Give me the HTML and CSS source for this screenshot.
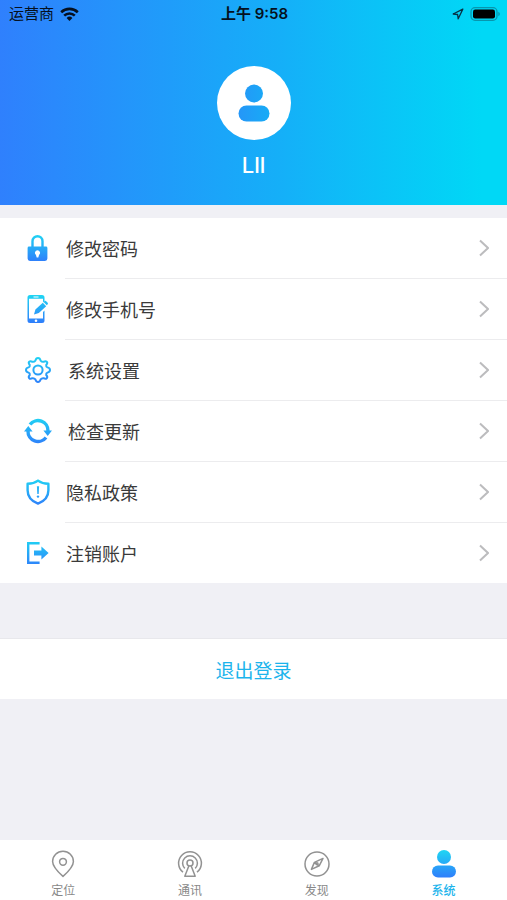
FILE: index.html
```html
<!DOCTYPE html>
<html lang="zh-CN">
<head>
    <meta charset="UTF-8">
    <meta name="viewport" content="width=device-width, initial-scale=1.0">
    <title>系统</title>
    <link rel="stylesheet" href="styles.css">
</head>
<body>
    <svg class="defs" width="0" height="0" aria-hidden="true">
        <defs>
            <linearGradient id="blue" gradientUnits="userSpaceOnUse" x1="0" y1="0" x2="0" y2="28">
                <stop offset="0" stop-color="#1fd6f3"/>
                <stop offset="1" stop-color="#2f7dfb"/>
            </linearGradient>
            <linearGradient id="blue-side" gradientUnits="userSpaceOnUse" x1="0" y1="0" x2="32" y2="0">
                <stop offset="0" stop-color="#2596f8"/>
                <stop offset="1" stop-color="#17acf6"/>
            </linearGradient>
        </defs>
    </svg>

    <header class="profile">
        <div class="status">
            <div class="status-left">
                <span>运营商</span>
                <svg width="19" height="14" viewBox="0 0 19 14">
                    <g fill="none" stroke="#051020" stroke-width="2.6">
                        <path d="M1.2 5.2a12 12 0 0 1 16.6 0"/>
                        <path d="M4.2 8.6a7.6 7.6 0 0 1 10.6 0"/>
                    </g>
                    <path fill="#051020" d="M6.6 11a4.2 4.2 0 0 1 5.8 0L9.5 14z"/>
                </svg>
            </div>
            <div class="status-time">上午 9:58</div>
            <div class="status-right">
                <svg width="12" height="12" viewBox="0 0 12 12">
                    <path d="M10.8 1.2 1.2 6l4.4.5.6 4.3z" fill="none" stroke="#083044" stroke-width="1.3" stroke-linejoin="round"/>
                </svg>
                <svg width="30" height="14" viewBox="0 0 30 14">
                    <rect x="1" y=".7" width="26" height="12.6" rx="4" fill="none" stroke="#0796ae" stroke-width="1.3"/>
                    <rect x="3" y="2.6" width="22" height="8.8" rx="2.2" fill="#000"/>
                    <path d="M28.3 4.8q1.6.7 1.6 2.2t-1.6 2.2z" fill="#0796ae"/>
                </svg>
            </div>
        </div>
        <div class="avatar">
            <svg width="32" height="38" viewBox="0 0 32 38" fill="url(#blue-side)">
                <circle cx="16" cy="9.5" r="9"/>
                <rect x=".5" y="21.5" width="31" height="16" rx="8"/>
            </svg>
        </div>
        <h1 class="name">Lll</h1>
    </header>

    <main>
        <ul class="menu">
            <li>
                <a class="menu-row" href="#password">
                    <svg class="menu-icon" viewBox="0 0 26 28">
                        <path d="M8.5 13V7.2a5 5 0 0 1 10 0V13" fill="none" stroke="url(#blue)" stroke-width="2.4"/>
                        <path fill="url(#blue)" fill-rule="evenodd" d="M5 12.600h17a1.400 1.400 0 0 1 1.400 1.400v10.600a2.400 2.400 0 0 1-2.400 2.400H6a2.400 2.400 0 0 1-2.400-2.400V14A1.400 1.400 0 0 1 5 12.600zm8.500 3.600a2.600 2.600 0 0 0-1.600 4.600l.8 2.600h1.600l.8-2.600a2.600 2.600 0 0 0-1.600-4.600z"/>
                    </svg>
                    <span>修改密码</span>
                    <svg class="chevron" viewBox="0 0 10 18"><path d="m1 1.5 8 7.5-8 7.5"/></svg>
                </a>
            </li>
            <li>
                <a class="menu-row" href="#phone">
                    <svg class="menu-icon" viewBox="0 0 26 28">
                        <path fill="url(#blue)" fill-rule="evenodd" d="M6 0h12a2.5 2.5 0 0 1 2.5 2.5V6L19 7.5V3.8H5v19.8h14V17l1.500-1.500v10A2.500 2.500 0 0 1 18 28H6a2.500 2.500 0 0 1-2.500-2.500v-23A2.500 2.500 0 0 1 6 0zm3.500 1.400v1.100h5V1.400zM12 24.400a1.300 1.300 0 1 0 0 2.600 1.300 1.300 0 0 0 0-2.600z"/>
                        <path fill="url(#blue)" d="m10 19.600 1.400-5 7.400-6.800 3.400 3.400-7.400 6.800zM19.600 7l1-.9q.8-.6 1.600.1l1.500 1.500q.6.800 0 1.500l-.9 1z"/>
                    </svg>
                    <span>修改手机号</span>
                    <svg class="chevron" viewBox="0 0 10 18"><path d="m1 1.5 8 7.5-8 7.5"/></svg>
                </a>
            </li>
            <li>
                <a class="menu-row" href="#settings">
                    <svg class="menu-icon menu-icon--wide" viewBox="0 0 28 28">
                        <g fill="none" stroke="url(#blue)" stroke-width="2" stroke-linejoin="round">
                            <path d="M11.4 4.600 Q12 2 14 2t2.600 2.600q1.200 1.500 3 1.200 2-1.200 3.200 0t-.6 3.200q-.3 1.800 1.200 2.400Q26 12 26 14t-2.600 2.600q-1.500.6-1.200 2.400 1.800 2 .6 3.200t-3.200 0q-1.800-.3-3 1.200Q16 26 14 26t-2.600-2.600q-1.200-1.500-3-1.200-2 1.200-3.200 0t.6-3.200q.3-1.800-1.200-2.400Q2 16 2 14t2.600-2.600q1.500-.6 1.200-2.400-1.800-2-.6-3.200t3.200 0q1.800.3 3-1.200z"/>
                            <circle cx="14" cy="14" r="4.6"/>
                        </g>
                    </svg>
                    <span>系统设置</span>
                    <svg class="chevron" viewBox="0 0 10 18"><path d="m1 1.5 8 7.5-8 7.5"/></svg>
                </a>
            </li>
            <li>
                <a class="menu-row" href="#update">
                    <svg class="menu-icon menu-icon--wide" viewBox="0 0 28 28">
                        <g fill="none" stroke="url(#blue)" stroke-width="3.4">
                            <path d="M6 7.600A10 10 0 0 1 24 14"/>
                            <path d="M22 20.400A10 10 0 0 1 4 14"/>
                        </g>
                        <path fill="url(#blue)" d="M19.400 13.400H28L23.700 19zM0 14.600h8.600L4.300 9z"/>
                    </svg>
                    <span>检查更新</span>
                    <svg class="chevron" viewBox="0 0 10 18"><path d="m1 1.5 8 7.5-8 7.5"/></svg>
                </a>
            </li>
            <li>
                <a class="menu-row" href="#privacy">
                    <svg class="menu-icon" viewBox="0 0 26 28">
                        <path d="M14 2.600q4 3 10.400 3.200v6.400Q24.400 21.600 14 25.600 3.600 21.600 3.600 12.200V5.800q6.400-.2 10.400-3.200z" fill="none" stroke="url(#blue)" stroke-width="2.4" stroke-linejoin="round"/>
                        <path fill="url(#blue)" d="M12.900 8.200h2.200l-.4 7.800h-1.400z"/>
                        <circle cx="14" cy="18.600" r="1.200" fill="url(#blue)"/>
                    </svg>
                    <span>隐私政策</span>
                    <svg class="chevron" viewBox="0 0 10 18"><path d="m1 1.5 8 7.5-8 7.5"/></svg>
                </a>
            </li>
            <li>
                <a class="menu-row" href="#cancel">
                    <svg class="menu-icon" viewBox="0 0 26 28">
                        <path d="M15.600 4.200H4.200v19.600h11.400" fill="none" stroke="url(#blue)" stroke-width="2.4"/>
                        <path fill="url(#blue)" d="M10 11.600h7.400V7.400L24.600 14l-7.200 6.600v-4.200H10z"/>
                    </svg>
                    <span>注销账户</span>
                    <svg class="chevron" viewBox="0 0 10 18"><path d="m1 1.5 8 7.5-8 7.5"/></svg>
                </a>
            </li>
        </ul>

        <button class="logout" type="button">退出登录</button>
    </main>

    <nav class="tabs">
        <a class="tab" href="#locate">
            <svg viewBox="0 0 28 28">
                <path d="M14 26.400Q3.600 17 3.600 11.400a10.400 10.200 0 0 1 20.800 0Q24.400 17 14 26.400z"/>
                <circle cx="14" cy="11.800" r="3.400"/>
            </svg>
            <span>定位</span>
        </a>
        <a class="tab" href="#talk">
            <svg viewBox="0 0 28 28">
                <path d="M7 22.200a11.400 11.400 0 1 1 14 0M8.800 18.400a7.400 7.400 0 1 1 10.400 0"/>
                <circle cx="14" cy="13" r="3"/>
                <path d="m12.800 16-4 10.200h10.400l-4-10.200"/>
            </svg>
            <span>通讯</span>
        </a>
        <a class="tab" href="#discover">
            <svg viewBox="0 0 28 28">
                <circle cx="14" cy="14" r="12"/>
                <path d="M20 8.400 11.400 12.400 8.400 19.400l7.800-3.600zM11.400 12.400l4.800 3.400"/>
                <circle cx="14" cy="13.800" r="1"/>
            </svg>
            <span>发现</span>
        </a>
        <a class="tab tab--active" href="#system">
            <svg viewBox="0 0 28 28">
                <circle cx="14" cy="7" r="7"/>
                <rect x="2" y="15.500" width="24" height="12" rx="6"/>
            </svg>
            <span>系统</span>
        </a>
    </nav>
</body>
</html>
```
FILE: styles.css
```css
*{
    margin: 0;
    padding: 0;
    box-sizing: border-box;
}
body{
    display: flex;
    flex-direction: column;
    min-height: 100vh;
    background: #f0f0f5;
    color: #3a3a3a;
    font-family: Inter, "Noto Sans CJK SC", sans-serif;
}
svg{
    display: block;
    flex: none;
}
a{
    color: inherit;
    text-decoration: none;
}
.defs{
    position: absolute;
}

.profile{
    display: flex;
    flex-direction: column;
    align-items: center;
    padding-bottom: 25px;
    background: linear-gradient(to right, #2f80fd, #15aff8 55%, #00d8f6 95%);
}
.status{
    display: grid;
    grid-template-columns: 1fr auto 1fr;
    align-items: center;
    width: 100%;
    height: 27px;
    padding: 0 7px 0 9px;
    color: #051020;
    font-size: 15px;
    line-height: 20px;
}
.status-left,
.status-right{
    display: flex;
    align-items: center;
    gap: 6px;
}
.status-right{
    justify-content: flex-end;
}
.status-time{
    font-weight: 600;
}
.avatar{
    display: flex;
    align-items: center;
    justify-content: center;
    width: 74px;
    height: 74px;
    margin-top: 39px;
    border-radius: 50%;
    background: #ffffff;
}
.name{
    margin-top: 10px;
    color: #ffffff;
    font-size: 22px;
    font-weight: 500;
    line-height: 30px;
}

.menu{
    margin-top: 13px;
    background: #ffffff;
    list-style: none;
}
.menu li + li::before{
    content: "";
    display: block;
    height: 1px;
    margin-left: 65px;
    background: #ececee;
}
.menu-row{
    display: flex;
    align-items: center;
    gap: 16px;
    height: 60px;
    padding: 0 18px 0 24px;
    font-size: 18px;
}
.menu-icon{
    width: 26px;
    height: 28px;
}
.menu-icon--wide{
    width: 28px;
}
.chevron{
    width: 10px;
    height: 18px;
    margin-left: auto;
    fill: none;
    stroke: #bcbcbe;
    stroke-width: 2;
}

.logout{
    display: block;
    width: 100%;
    height: 61px;
    margin-top: 55px;
    border: 0;
    border-top: 1px solid #e8e8ec;
    background: #ffffff;
    color: #1cb4ec;
    font-family: inherit;
    font-size: 19px;
}

.tabs{
    display: flex;
    height: 60px;
    margin-top: auto;
    background: #ffffff;
}
.tab{
    display: flex;
    flex: 1;
    flex-direction: column;
    align-items: center;
    gap: 4px;
    padding-top: 10px;
    color: #888888;
    font-size: 12px;
    line-height: 18px;
}
.tab svg{
    width: 28px;
    height: 28px;
    fill: none;
    stroke: #929292;
    stroke-width: 1.5;
    stroke-linejoin: round;
}
.tab--active{
    color: #1cb4ec;
    font-weight: 500;
}
.tab--active svg{
    fill: url(#blue);
    stroke: none;
}
```
